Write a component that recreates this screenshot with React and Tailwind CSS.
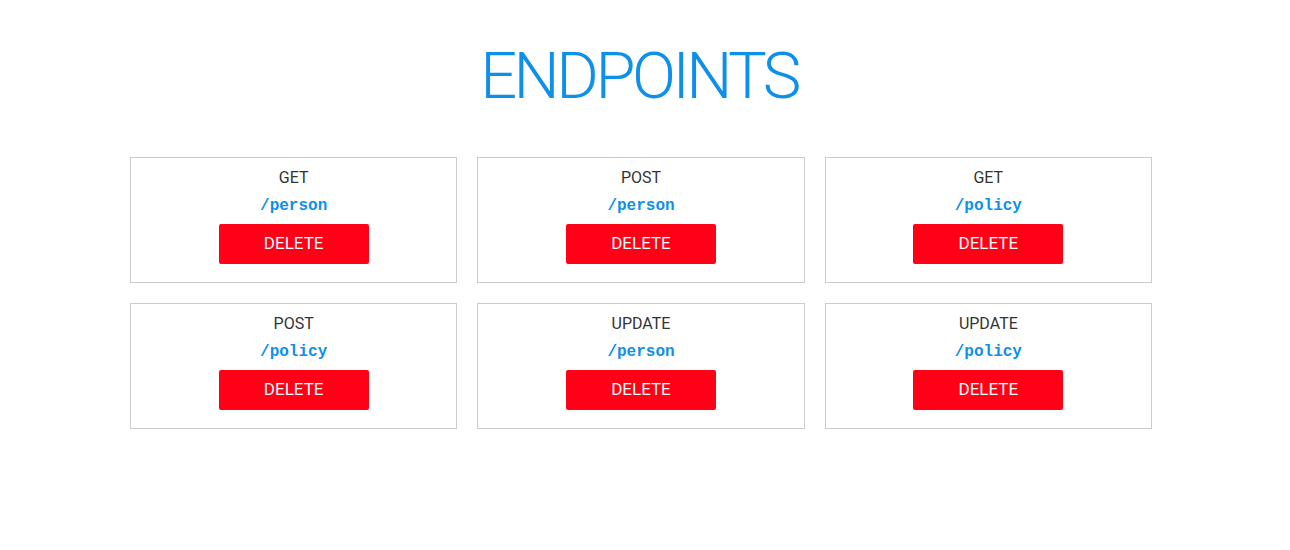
import React from "react";

const endpoints = [
  { method: "GET", path: "/person" },
  { method: "POST", path: "/person" },
  { method: "GET", path: "/policy" },
  { method: "POST", path: "/policy" },
  { method: "UPDATE", path: "/person" },
  { method: "UPDATE", path: "/policy" },
];

function EndpointCard({ method, path }) {
  return (
    <div className="border border-[#cccccc] h-[126px] flex flex-col items-center pt-[10px]">
      <p className="text-[16px] leading-[20px] text-[#333333]">{method}</p>
      <p
        className="mt-[8px] text-[16px] leading-[20px] font-bold text-[#0e8fea]"
        style={{ fontFamily: '"Liberation Mono", "Courier New", monospace' }}
      >
        {path}
      </p>
      <button className="mt-[8px] w-[150px] h-[40px] bg-[#ff0016] text-white text-[17px] rounded-[2px]">
        DELETE
      </button>
    </div>
  );
}

export default function App() {
  return (
    <div
      className="min-h-screen bg-white"
      style={{ fontFamily: "Roboto, 'Helvetica Neue', Arial, sans-serif" }}
    >
      <h1 className="pt-[40px] pr-[12px] text-center text-[65px] leading-[72px] font-light tracking-[-3.5px] text-[#0e8fea]">
        ENDPOINTS
      </h1>
      <div className="mt-[45px] ml-[130px] w-[1022px] grid grid-cols-3 gap-x-[20px] gap-y-[20px]">
        {endpoints.map((e, i) => (
          <EndpointCard key={i} method={e.method} path={e.path} />
        ))}
      </div>
    </div>
  );
}
